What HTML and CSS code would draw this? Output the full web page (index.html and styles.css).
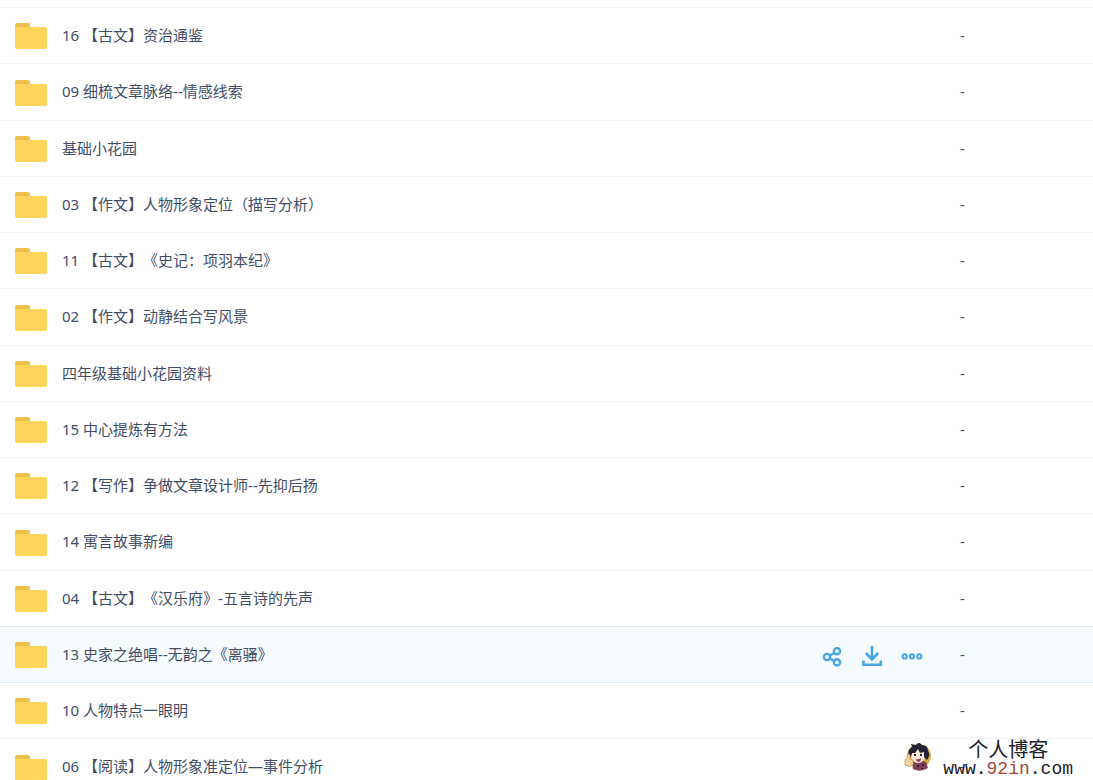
FILE: index.html
```
<!DOCTYPE html>
<html lang="zh-CN">
	<head>
		<meta charset="UTF-8">
		<title>个人博客</title>
		<link rel="stylesheet" href="styles.css">
		<script src="list.js" defer></script>
	</head>
	<body>
		<!-- 文件夹图标 -->
		<svg class="sprite" width="0" height="0" aria-hidden="true">
			<symbol id="folder" viewBox="0 0 32 27">
				<path fill="#ecc04b" d="M0 6V2Q0 0 2 0H13Q15 0 15 2V6Z"/>
				<path fill="#ffd65b" d="M0 4H30Q32 4 32 6V24Q32 26 30 26H2Q0 26 0 24Z"/>
			</symbol>
		</svg>

		<ul id="list" class="list"></ul>

		<!-- 鼠标停留时显示的操作 -->
		<template id="tools">
			<div class="tools">
				<button type="button" class="tool" aria-label="分享">
					<svg width="22" height="22" viewBox="0 0 22 22" fill="none" stroke="#46a5e3" stroke-width="2.4">
						<circle cx="16" cy="5.2" r="3.1"/>
						<circle cx="6" cy="11" r="3.1"/>
						<circle cx="16" cy="16.3" r="3.1"/>
						<path d="M8.8 9.5L13.2 7M8.8 12.5L13.2 15"/>
					</svg>
				</button>
				<button type="button" class="tool" aria-label="下载">
					<svg width="22" height="22" viewBox="0 0 22 22" fill="none" stroke="#46a5e3" stroke-width="2.6">
						<path d="M11 0V13M4.8 7L11 13.4L17.2 7"/>
						<path d="M2.4 14.5V18.8H19.8V14.5"/>
					</svg>
				</button>
				<button type="button" class="tool" aria-label="更多">
					<svg width="22" height="22" viewBox="0 0 22 22" fill="none" stroke="#46a5e3" stroke-width="2">
						<circle cx="3.7" cy="10.4" r="2.1"/>
						<circle cx="11" cy="10.4" r="2.1"/>
						<circle cx="18.3" cy="10.4" r="2.1"/>
					</svg>
				</button>
			</div>
		</template>

		<!-- 右下角水印 -->
		<div class="mark">
			<svg class="face" width="28" height="30" viewBox="0 0 28 30" aria-hidden="true">
				<circle cx="15" cy="14" r="12" fill="#dfa83e"/>
				<path fill="#83405d" d="M8 20Q15 16 22 20L24 26Q16 31 9 27Z"/>
				<ellipse cx="14" cy="14" rx="7" ry="7" fill="#fbe9dc"/>
				<path fill="#252434" d="M5 14Q3 8 8 5L7 2L12 3Q15 -1 18 3Q24 3 24 9Q27 13 23 18L20 15V10L16 11L14 7L11 11L8 11L7 15Z"/>
				<path fill="#252434" d="M10 12h2v2h-2zM16 12h2v2h-2z"/>
				<path fill="#a33546" d="M12 17Q15 18 17 16Q17 20 14 20Q12 19 12 17Z"/>
				<path fill="#f4d49e" stroke="#b98a4d" stroke-width=".7" d="M3 13Q4 11 6 13L6 17L9 18L9 23Q5 26 1 23L1 18L3 17Z"/>
				<path fill="#252434" d="M13 23h2v2h-2zM18 22h2v2h-2zM17 26h2v1h-2z"/>
			</svg>
			<div class="mark-text">
				<p class="mark-name">个人博客</p>
				<p class="mark-site">www.<span class="red">92in</span>.com</p>
			</div>
		</div>
	</body>
</html>
```
FILE: styles.css
```
* {
	margin: 0;
	padding: 0;
	box-sizing: border-box;
}

body {
	height: 100vh;
	overflow: hidden;
	background: #fff;
	font-family: "Noto Sans", "Noto Sans CJK SC", sans-serif;
	font-size: 15px;
	line-height: 20px;
	color: #424e67;
	text-spacing-trim: space-all;
}

.sprite {
	position: absolute;
}

.list {
	list-style: none;
	padding-top: 7px;
}

.row {
	display: flex;
	align-items: center;
	height: 56px;
	padding: 0 15px;
	border-top: 1px solid #f2f6fd;
}

.row:nth-child(4n+2) {
	height: 57px;
}

.row.on {
	background: #f6fbff;
	border-top-color: #d9e9f8;
}

.row.on + .row {
	border-top-color: #d9e9f8;
}

.folder {
	flex: none;
	width: 32px;
	height: 27px;
	margin-top: 2px;
	margin-right: 15px;
}

.name,
.size {
	padding-bottom: 2px;
}

.name {
	flex: 1;
	color: inherit;
	text-decoration: none;
	white-space: nowrap;
}

.size {
	flex: none;
	width: 118px;
}

.tools {
	display: flex;
	gap: 18px;
	margin-right: 37px;
	padding-top: 4px;
}

.tool {
	width: 22px;
	height: 22px;
	border: none;
	background: none;
	cursor: pointer;
}

.tool svg {
	display: block;
}

.mark {
	position: absolute;
	right: 20px;
	bottom: 2px;
	display: flex;
	align-items: center;
	gap: 11px;
	color: #20202c;
}

.face {
	margin-bottom: 4px;
}

.mark-text {
	text-align: center;
}

.mark-name {
	font-size: 20px;
	line-height: 20px;
}

.mark-site {
	font-family: "Liberation Mono", monospace;
	font-size: 18px;
	line-height: 18px;
}

.red {
	color: #a8453f;
}
```
FILE: list.js
```
var names = [
	"16 【古文】资治通鉴",
	"09 细梳文章脉络--情感线索",
	"基础小花园",
	"03 【作文】人物形象定位（描写分析）",
	"11 【古文】《史记：项羽本纪》",
	"02 【作文】动静结合写风景",
	"四年级基础小花园资料",
	"15 中心提炼有方法",
	"12 【写作】争做文章设计师--先抑后扬",
	"14 寓言故事新编",
	"04 【古文】《汉乐府》-五言诗的先声",
	"13 史家之绝唱--无韵之《离骚》",
	"10 人物特点一眼明",
	"06 【阅读】人物形象准定位—事件分析"
];

//当前选中的下标
var current = 11;

var oList = document.getElementById("list");
var oTools = document.getElementById("tools");

for (var i=0; i<names.length; i++) {
	var oLi = document.createElement("li");
	oLi.className = i == current ? "row on" : "row";
	oLi.innerHTML = '<svg class="folder" aria-hidden="true"><use href="#folder"/></svg>'
		+ '<a class="name" href="#">' + names[i] + '</a>'
		+ '<span class="size">-</span>';
	if (i == current) {
		oLi.insertBefore(oTools.content.cloneNode(true), oLi.lastChild);
	}
	oList.appendChild(oLi);
}
```
